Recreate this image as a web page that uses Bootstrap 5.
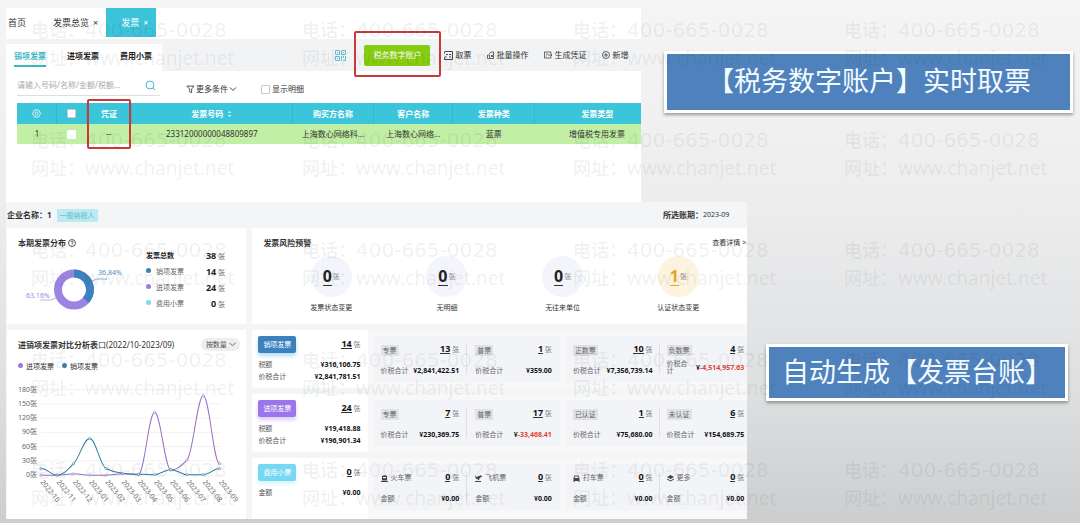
<!DOCTYPE html>
<html lang="zh-CN">
<head>
<meta charset="utf-8">
<meta name="viewport" content="width=device-width, initial-scale=1">
<title>发票台账</title>
<link href="https://cdn.jsdelivr.net/npm/bootstrap@5.3.0/dist/css/bootstrap.min.css" rel="stylesheet">
<style>
body{font-family:"Noto Sans","Noto Sans CJK SC",sans-serif;font-size:8px;line-height:12px;color:#333;min-height:100vh;overflow-x:hidden;background:linear-gradient(180deg,#f5f5f5 0,#ededee 38%,#dddfe0 75%,#cbcdce 100%)}
a{color:inherit;text-decoration:none}
button{border:0;background:none;padding:0;color:inherit;line-height:inherit}
svg{display:block;flex:none}
.stage{padding:8px 6px 4px}
.shot-top{width:59.5%;height:194px}
.shot-bottom{width:69.4%;background:#f3f5f6}
.tabbar{height:31px;font-size:9px;background:#fff}
.tabbar a{padding:0 8px 0 20px;height:29px}
.tabbar a.first{padding:0 7px 0 2px}
.tabbar a.on{background:#3bc3da;color:#fff;padding:0 8px 0 15px}
.toolstrip{background:#f2f3f4;padding-top:5px}
.subtabs{background:#fff;width:156px;height:27px;padding-left:8px;gap:21px;font-weight:700;color:#222}
.subtabs a{height:23px;line-height:24px}
.subtabs a.on{color:#3bb9cc;border-bottom:2px solid #3bb9b9}
.tools{gap:16px;padding-right:13px;margin-top:-5px}
.tools>button{gap:2px}
.btn-tax{background:#86cc10;color:#fff;border-radius:2px;width:66px;height:21px}
.taxwrap{margin:0 -2px 0 2px}
.ring{position:absolute;border:2px solid #c9393a;border-radius:2px;pointer-events:none;z-index:2}
.tax-ring{inset:-14px -11px -11px -10px}
.filters{height:32px;padding-left:11px}
.searchline{width:143px;height:25px;border-bottom:1px solid #dedede;margin-right:2px}
.searchline input{border:0;outline:0;width:125px;background:none;padding:0}
.searchline input::placeholder{color:#aaa}
input[type=checkbox]{width:9px;height:9px;margin:0;background:#fff;border:1px solid #c9c9c9;border-radius:1px;appearance:none;display:block}
.bill{table-layout:fixed;width:calc(100% - 11px);margin-left:11px;text-align:center}
.bill th{background:#3bc5da;color:#fff;height:21px;border-right:1px solid #35b7cc;padding:0;position:relative;text-align:center}
.bill th:last-child{border:0}
.bill td{background:#c2efa6;height:20px;padding:0}
.bill .wide{padding-left:18px}
.cert-ring{inset:-4px 0 -25px}
.callout{background:#4f81bd;color:#f2fbff;border:3px solid #fff;box-shadow:0 2px 3px rgba(40,60,40,.45);font-size:27px;line-height:40px;text-align:center;font-family:"Noto Sans CJK SC",sans-serif}
.callout-a{margin:43px 0 0 23px;width:409px;padding:6px 0 10px;max-width:100%}
.callout-b{margin:142px 6px 0 19px;padding:4px 0 7px}
.infobar{height:26px;padding:0 1px}
.infobar .taxer{background:#bdeaf0;color:#55bdcc;padding:0 3px;margin-left:5px;line-height:13px;font-size:7px}
.board{display:grid;grid-template-columns:minmax(0,239fr) minmax(0,494fr);gap:6px;padding-left:1px}
.pane{background:#fff}
.pane h2{font-size:8px;line-height:12px;font-weight:700;margin:0}
.r1{height:96px;padding:9px 11px}
.r1.risk{padding-right:1px}
.donut{margin-top:8px}
.tally{width:79px;font-size:7px;position:absolute;left:139px;top:20px}
.tally th,.tally td{height:16px;padding:0;font-weight:400;color:#666}
.tally td{text-align:right}
.tally b{font-size:9px;color:#222}
.dot{display:inline-block;width:5px;height:5px;border-radius:50%;margin:0 5px 1px 0}
.tiny{font-size:7px}
.risks{display:grid;grid-template-columns:repeat(4,1fr);margin:7px 10px 0}
.disc{width:41px;height:41px;border-radius:50%;background:#f4f5fc;font-size:7px;color:#888;margin-bottom:5px}
.disc b{font-size:16px;line-height:18px;border-bottom:1px solid #333;color:#222;margin-right:1px}
.disc.warn{background:#fdf3df}
.disc.warn b{color:#e0a526;border-color:#e0a526}
.mode{font-size:7px;border:0;background:none;line-height:13px;padding:0;appearance:none;color:#555;width:31px}
.pill{width:39px;height:13px;background:#eeeeef;border-radius:7px;color:#555}
.pill svg{margin-left:-8px}
.trendhead{padding:8px 6px 0 11px}
.keys{font-size:7px;padding:10px 11px 0}
.keys .dot{margin-right:3px}
#trend{margin-top:3px}
.ledger{display:grid;grid-template-rows:58px 58px 61px;gap:6px;font-size:7px}
.lrow{display:grid;grid-template-columns:minmax(0,115fr) minmax(0,186fr) minmax(0,181fr);gap:6px;background:#f8f8f9}
.head{background:#fff;padding:6px 7px 0 6px;border-radius:2px;color:#555}
.head .first{padding-top:2px}
.kind{width:38px;height:17px;border-radius:2px;color:#fff;line-height:17px;text-align:center}
.kind.k1{background:#3a81bd;box-shadow:0 3px 4px #b4dcf8}
.kind.k2{background:#9b76ea;box-shadow:0 3px 4px #dccbfb}
.kind.k3{background:#76d8f3;box-shadow:0 3px 4px #d4f4fc}
.num b{font-size:9px;border-bottom:1px solid #333;line-height:9px;display:inline-block;color:#111}
.num{color:#777;white-space:nowrap}
.amt{font-weight:700;color:#111;white-space:nowrap}
.amt i{font-style:normal;color:#dc4438}
.duo{background:#f3f4f8;margin-top:6px;height:46px;padding:8px 8px 0 7px;display:grid;grid-template-columns:minmax(0,1fr) minmax(0,1fr);color:#666}
.duo>div{padding-right:7px}
.duo>div+div{border-left:1px solid #e0e1e5;padding:0 0 0 8px;height:30px}
.duo.cut{padding-right:3px}
.duo.cut>div{padding-right:6px}
.duo.cut>div+div{padding:0 0 0 7px}
.duo .line2{height:14px;margin-top:7px;line-height:7px;gap:1px;white-space:nowrap}
.duo .line2.wraps{white-space:normal;margin-top:4px;gap:5px}
.chip{background:#e1e2e5;padding:0 2px;line-height:11px}
.icn{gap:3px}
.marks{position:absolute;inset:0;overflow:hidden;pointer-events:none;padding:16px 0 0 31px;display:grid;grid-template-columns:repeat(auto-fill,271px);grid-auto-rows:110px;color:rgba(30,40,40,.08);font-size:19px;line-height:28px;z-index:5;white-space:nowrap;width:1160px}
.marks span{font-size:18px;font-weight:500}
.marks .tel{font-family:"DejaVu Sans",sans-serif;font-size:20px}
svg text{font-size:7px;fill:#666}
</style>
</head>
<body>
<div class="position-relative overflow-hidden min-vh-100">
<main class="stage">
 <div class="d-flex">
  <section class="shot-top bg-white flex-shrink-0">
   <nav class="tabbar d-flex align-items-start">
    <a href="#" class="first d-flex align-items-center">首页</a>
    <a href="#" class="d-flex align-items-center gap-1">发票总览 <span>×</span></a>
    <a href="#" class="on d-flex align-items-center gap-1">发票 <span>×</span></a>
   </nav>
   <div class="toolstrip d-flex align-items-center justify-content-between">
    <nav class="subtabs d-flex"><a href="#" class="on">销项发票</a><a href="#">进项发票</a><a href="#">费用小票</a></nav>
    <div class="tools d-flex align-items-center">
     <svg width="11" height="11" viewBox="0 0 11 11" fill="none" stroke="#62bfd2"><path d="M.5.5h4v4h-4zM6.500.5h4v4h-4zM.5 6.500h4v4h-4zM2 2.500h1M8 2.500h1M2 8.500h1M6.500 6v5M8.500 6v2M10.500 6v5M8 10.500h2"/></svg>
     <div class="position-relative taxwrap"><button class="btn-tax">税务数字账户</button><span class="ring tax-ring"></span></div>
     <button class="d-flex align-items-center"><svg width="9" height="9" viewBox="0 0 9 9" fill="none" stroke="#444"><path d="M1 .5h7.500v8H.5v-2M.5.5v2M2 3l1 1 1-1M5 3.500h2M.5 6h2M5 6h2"/></svg>取票</button>
     <button class="d-flex align-items-center"><svg width="7" height="8" viewBox="0 0 7 8" fill="none" stroke="#444" stroke-width=".8"><path d="M.5 4v3.500h2V4zM3 7.500h3.500v-3H4M2 3l2-2h2.500v3M4 5.500h2"/></svg>批量操作</button>
     <button class="d-flex align-items-center"><svg width="8" height="8" viewBox="0 0 8 8" fill="none" stroke="#444" stroke-width=".8"><path d="M7 2.500V1H.5v6H7V5.500M2 3h2M2 5h1M4 4h4M6.500 2.700L8 4 6.500 5.300"/></svg>生成凭证</button>
     <button class="d-flex align-items-center"><svg width="8" height="8" viewBox="0 0 8 8" fill="none" stroke="#444" stroke-width=".8"><circle cx="4" cy="4" r="3.500"/><path d="M4 2v4M2 4h4"/></svg>新增</button>
    </div>
   </div>
   <div class="filters d-flex align-items-start">
    <div class="searchline d-flex align-items-center justify-content-between pe-1 pt-1">
     <input type="text" aria-label="搜索" placeholder="请输入号码/名称/金额/税额...">
     <svg width="11" height="11" viewBox="0 0 11 11" fill="none" stroke="#4bb9cd"><circle cx="5" cy="5" r="4"/><path d="M8 8l2 2"/></svg>
    </div>
    <button class="d-flex align-items-center ms-4 mt-2 pt-1" style="gap:1px"><svg width="9" height="9" viewBox="0 0 10 9" fill="none" stroke="#444"><path d="M1 .7h8L6.200 4v4L4 7V4z"/></svg><span>更多条件</span><svg width="8" height="6" viewBox="0 0 8 6" fill="none" stroke="#444"><path d="M1 1.500l3 3 3-3"/></svg></button>
    <label class="d-flex align-items-center mt-2 pt-1 ms-4" style="gap:2px"><input type="checkbox">显示明细</label>
   </div>
   <table class="bill">
    <colgroup><col style="width:6.400%"><col style="width:4.800%"><col style="width:7.100%"><col style="width:25.800%"><col style="width:13%"><col style="width:12.700%"><col style="width:13.100%"><col></colgroup>
    <thead><tr><th><svg class="mx-auto" width="9" height="9" viewBox="0 0 9 9" fill="none" stroke="#fff" stroke-width=".8"><path d="M2.500 1h4l2 3.500-2 3.500h-4l-2-3.500z"/><circle cx="4.500" cy="4.500" r="1.500"/></svg></th><th><input class="mx-auto" type="checkbox" aria-label="全选"></th><th>凭证<span class="ring cert-ring"></span></th><th><span class="d-inline-flex align-items-center gap-1">发票号码<svg width="5" height="8" viewBox="0 0 5 8" fill="#c8f3fa"><path d="M.5 3l2-2 2 2zM.5 5l2 2 2-2z"/></svg></span></th><th>购买方名称</th><th>客户名称</th><th>发票种类</th><th class="wide">发票类型</th></tr></thead>
    <tbody><tr><td>1</td><td><input class="mx-auto border-white" type="checkbox" aria-label="选择第1行"></td><td>--</td><td>23312000000048809897</td><td>上海数心网络科...</td><td>上海数心网络...</td><td>蓝票</td><td class="wide">增值税专用发票</td></tr></tbody>
   </table>
  </section>
  <aside class="flex-grow-1"><div class="callout callout-a">【税务数字账户】实时取票</div></aside>
 </div>
 <div class="d-flex">
  <section class="shot-bottom flex-shrink-0">
   <div class="infobar d-flex align-items-center justify-content-between">
    <div class="d-flex align-items-center"><b>企业名称：1</b><span class="taxer">一般纳税人</span></div>
    <div class="d-flex align-items-center" style="padding-right:17px"><b>所选账期：</b><span class="tiny">2023-09</span></div>
   </div>
   <div class="board">
    <section class="pane r1 position-relative">
     <h2 class="d-flex align-items-center" style="gap:2px">本期发票分布<svg width="8" height="8" viewBox="0 0 8 8" fill="none" stroke="#333" stroke-width=".8"><circle cx="4" cy="4" r="3.500"/><path d="M3 3.200c0-1.500 2.200-1.500 2.200 0C5.200 4 4 4 4 5M4 5.600v.8"/></svg></h2>
     <svg class="donut" width="112" height="58" viewBox="18 257 112 58" fill="none" role="img" aria-label="销项36.84%，进项63.16%">
      <circle cx="74" cy="289.500" r="16" stroke="#9d84e3" stroke-width="8"/>
      <path d="M74 273.500A16 16 0 0 1 85.800 300.300" stroke="#3b83bd" stroke-width="8"/>
      <path d="M92 281l5-2h10" stroke="#6f9ec6" stroke-width=".8"/><path d="M56 298l-5 2H40" stroke="#b5a0dc" stroke-width=".8"/>
      <text x="98" y="275" style="fill:#4f90c4">36.84%</text><text x="26" y="298" style="fill:#a288dd">63.16%</text>
     </svg>
     <table class="tally">
      <tr><th class="fw-bold text-dark">发票总数</th><td><b>38</b> 张</td></tr>
      <tr><th><i class="dot" style="background:#3b83ad"></i>销项发票</th><td><b>14</b> 张</td></tr>
      <tr><th><i class="dot" style="background:#9d7bd8"></i>进项发票</th><td><b>24</b> 张</td></tr>
      <tr><th><i class="dot" style="background:#7ed9ee"></i>费用小票</th><td><b>0</b> 张</td></tr>
     </table>
    </section>
    <section class="pane r1 risk">
     <div class="d-flex justify-content-between"><h2>发票风险预警</h2><a href="#" class="tiny">查看详情 &gt;</a></div>
     <div class="risks tiny">
      <div class="d-flex flex-column align-items-center"><div class="disc d-flex align-items-center justify-content-center"><b>0</b>张</div><div>发票状态变更</div></div>
      <div class="d-flex flex-column align-items-center"><div class="disc d-flex align-items-center justify-content-center"><b>0</b>张</div><div>无明细</div></div>
      <div class="d-flex flex-column align-items-center"><div class="disc d-flex align-items-center justify-content-center"><b>0</b>张</div><div>无往来单位</div></div>
      <div class="d-flex flex-column align-items-center"><div class="disc warn d-flex align-items-center justify-content-center"><b>1</b>张</div><div>认证状态变更</div></div>
     </div>
    </section>
    <section class="pane">
     <div class="trendhead d-flex align-items-center justify-content-between">
      <h2>进销项发票对比分析表<span class="fw-normal">口(2022/10-2023/09)</span></h2>
      <div class="pill d-flex align-items-center justify-content-center"><select class="mode" aria-label="统计方式"><option>按数量</option></select><svg width="7" height="5" viewBox="0 0 7 5" fill="none" stroke="#666"><path d="M.5.8l3 3 3-3"/></svg></div>
     </div>
     <div class="keys d-flex gap-2"><span><i class="dot" style="background:#9d7bd8"></i>进项发票</span><span><i class="dot" style="background:#3b83ad"></i>销项发票</span></div>
     <svg id="trend" width="100%" viewBox="0 0 239 132" fill="none"></svg>
    </section>
    <section class="ledger">
     <div class="lrow">
      <div class="head"><div class="d-flex justify-content-between align-items-center mb-1"><span class="kind k1">销项发票</span><span class="num"><b>14</b> 张</span></div>
       <div class="d-flex justify-content-between first"><span>税额</span><span class="amt">¥316,106.75</span></div><div class="d-flex justify-content-between"><span>价税合计</span><span class="amt">¥2,841,781.51</span></div></div>
      <div class="duo">
       <div><div class="d-flex justify-content-between align-items-center"><span class="chip">专票</span><span class="num"><b>13</b> 张</span></div><div class="line2 d-flex justify-content-between align-items-center"><span>价税合计</span><span class="amt">¥2,841,422.51</span></div></div>
       <div><div class="d-flex justify-content-between align-items-center"><span class="chip">普票</span><span class="num"><b>1</b> 张</span></div><div class="line2 d-flex justify-content-between align-items-center"><span>价税合计</span><span class="amt">¥359.00</span></div></div>
      </div>
      <div class="duo cut">
       <div><div class="d-flex justify-content-between align-items-center"><span class="chip">正数票</span><span class="num"><b>10</b> 张</span></div><div class="line2 d-flex justify-content-between align-items-center"><span>价税合计</span><span class="amt">¥7,356,739.14</span></div></div>
       <div><div class="d-flex justify-content-between align-items-center"><span class="chip">负数票</span><span class="num"><b>4</b> 张</span></div><div class="line2 wraps d-flex justify-content-between align-items-center"><span>价税合计</span><span class="amt">¥<i>-4,514,957.63</i></span></div></div>
      </div>
     </div>
     <div class="lrow">
      <div class="head"><div class="d-flex justify-content-between align-items-center mb-1"><span class="kind k2">进项发票</span><span class="num"><b>24</b> 张</span></div>
       <div class="d-flex justify-content-between first"><span>税额</span><span class="amt">¥19,418.88</span></div><div class="d-flex justify-content-between"><span>价税合计</span><span class="amt">¥196,901.34</span></div></div>
      <div class="duo">
       <div><div class="d-flex justify-content-between align-items-center"><span class="chip">专票</span><span class="num"><b>7</b> 张</span></div><div class="line2 d-flex justify-content-between align-items-center"><span>价税合计</span><span class="amt">¥230,369.75</span></div></div>
       <div><div class="d-flex justify-content-between align-items-center"><span class="chip">普票</span><span class="num"><b>17</b> 张</span></div><div class="line2 d-flex justify-content-between align-items-center"><span>价税合计</span><span class="amt">¥<i>-33,468.41</i></span></div></div>
      </div>
      <div class="duo cut">
       <div><div class="d-flex justify-content-between align-items-center"><span class="chip">已认证</span><span class="num"><b>1</b> 张</span></div><div class="line2 d-flex justify-content-between align-items-center"><span>价税合计</span><span class="amt">¥75,680.00</span></div></div>
       <div><div class="d-flex justify-content-between align-items-center"><span class="chip">未认证</span><span class="num"><b>6</b> 张</span></div><div class="line2 d-flex justify-content-between align-items-center"><span>价税合计</span><span class="amt">¥154,689.75</span></div></div>
      </div>
     </div>
     <div class="lrow">
      <div class="head"><div class="d-flex justify-content-between align-items-center mb-1"><span class="kind k3">费用小票</span><span class="num"><b>0</b> 张</span></div>
       <div class="d-flex justify-content-between first"><span>金额</span><span class="amt">¥0.00</span></div></div>
      <div class="duo">
       <div><div class="d-flex justify-content-between align-items-center"><span class="icn d-flex align-items-center"><svg width="7" height="7" viewBox="0 0 7 7" fill="#444"><path d="M1 1q2.500-1.500 5 0v4.500H1zM0 6h7v1H0z"/><path d="M2 2h3v1.200H2z" fill="#f3f4f8"/></svg>火车票</span><span class="num"><b>0</b> 张</span></div><div class="line2 d-flex justify-content-between align-items-center"><span>金额</span><span class="amt">¥0.00</span></div></div>
       <div><div class="d-flex justify-content-between align-items-center"><span class="icn d-flex align-items-center"><svg width="7" height="7" viewBox="0 0 7 7" fill="#444"><path d="M0 .5l1.500 1.500L6 .3l1 .9L5 3 3.800 5l-1.300.2.300-1.500L1 4zM0 6h6v1H0z"/></svg>飞机票</span><span class="num"><b>0</b> 张</span></div><div class="line2 d-flex justify-content-between align-items-center"><span>金额</span><span class="amt">¥0.00</span></div></div>
      </div>
      <div class="duo cut">
       <div><div class="d-flex justify-content-between align-items-center"><span class="icn d-flex align-items-center"><svg width="7" height="7" viewBox="0 0 7 7" fill="#444"><path d="M1.500.5h4L6.500 3v4h-1V6h-4v1h-1V3z"/><path d="M2 1.500h3L5.500 3h-4z" fill="#f3f4f8"/></svg>打车票</span><span class="num"><b>0</b> 张</span></div><div class="line2 d-flex justify-content-between align-items-center"><span>金额</span><span class="amt">¥0.00</span></div></div>
       <div><div class="d-flex justify-content-between align-items-center"><span class="icn d-flex align-items-center"><svg width="7" height="7" viewBox="0 0 7 7" fill="#444"><path d="M0 2l3.500-2L7 2 3.500 4zM0 3.500l3.500 2 3.500-2v1L3.500 6.500 0 4.500z"/></svg>更多</span><span class="num"><b>0</b> 张</span></div><div class="line2 d-flex justify-content-between align-items-center"><span>金额</span><span class="amt">¥0.00</span></div></div>
      </div>
     </div>
    </section>
   </div>
  </section>
  <aside class="flex-grow-1"><div class="callout callout-b">自动生成【发票台账】</div></aside>
 </div>
</main>
<div class="marks" id="marks" aria-hidden="true"></div>
</div>
<script src="https://cdn.jsdelivr.net/npm/bootstrap@5.3.0/dist/js/bootstrap.bundle.min.js"></script>
<script>
// Repeating contact watermark
document.getElementById('marks').innerHTML = Array(20).fill('<div><div><span>电话：</span><span class="tel">400-665-0028</span></div><div><span>网址：</span>www.chanjet.net</div></div>').join('');

// Monthly trend lines
const months = ['2022-10','2022-11','2022-12','2023-01','2023-02','2023-03','2023-04','2023-05','2023-06','2023-07','2023-08','2023-09'];
const series = [
  {color:'#9a6fc4', data:[0,0,3,0,0,3,1,132,11,32,167,24]},
  {color:'#2f7f9f', data:[14,0,24,77,14,4,2,1,12,1,1,14]}
];
const px = i => 34 + i * 16.2, py = v => 99 - v * 0.475;
let out = '';
for (let v = 0; v <= 180; v += 30) {
  out += `<path d="M34 ${py(v)}H214" stroke="#ececef" stroke-width=".7"/><text x="30" y="${py(v) + 2}" text-anchor="end">${v}张</text>`;
}
months.forEach((m, i) => { out += `<text transform="translate(${px(i) - 1} ${106}) rotate(51)">${m}</text>`; });
for (const s of series) {
  const n = s.data.length;
  const slope = s.data.map((v, i) => {
    if (!i || i === n - 1) return 0;
    const a = v - s.data[i - 1], b = s.data[i + 1] - v;
    return a * b <= 0 ? 0 : 2 * a * b / (a + b);
  });
  let d = `M${px(0)} ${py(s.data[0])}`;
  for (let i = 1; i < n; i++) {
    d += `C${px(i - 1) + 6} ${py(s.data[i - 1] + slope[i - 1] * .37)} ${px(i) - 6} ${py(s.data[i] - slope[i] * .37)} ${px(i)} ${py(s.data[i])}`;
  }
  out += `<path d="${d}" stroke="${s.color}" stroke-width="1"/>`;
  s.data.forEach((v, i) => { out += `<circle cx="${px(i)}" cy="${py(v)}" r="1.1" fill="#fff" stroke="${s.color}" stroke-width=".6"/>`; });
}
document.getElementById('trend').innerHTML = out;
</script>
</body>
</html>
